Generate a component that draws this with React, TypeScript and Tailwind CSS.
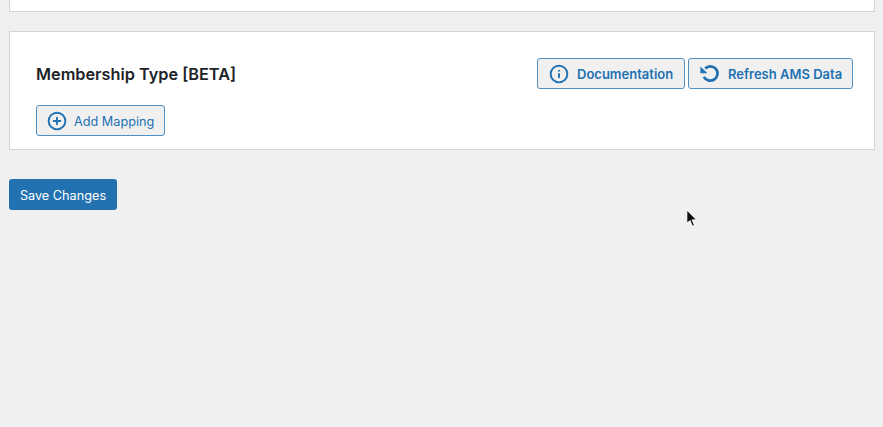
import { Info, CirclePlus } from 'lucide-react'

const font = { fontFamily: 'Inter, "Liberation Sans", sans-serif' }

function OutlineButton({ icon, label, className }: { icon: React.ReactNode; label: string; className: string }) {
  return (
    <button className={`flex items-center h-[31px] rounded-[3px] border border-[#4f90c4] bg-[#f0f0f1] text-[#2271b1] ${className}`}>
      {icon}
      <span className="mt-[2px]">{label}</span>
    </button>
  )
}

function RefreshIcon() {
  return (
    <svg width="19" height="19" viewBox="0 0 19 19" fill="none">
      <path d="M5.2 4.4A7.2 7.2 0 1 1 3.9 12.8" stroke="#2271b1" strokeWidth="2.8" />
      <path d="M0.4 2.4V9.2H7.4Z" fill="#2271b1" />
    </svg>
  )
}

export default function App() {
  return (
    <div style={font} className="relative w-[883px] h-[427px] bg-[#f0f0f1] overflow-hidden px-[9px]">
      <div className="h-[12px] w-[866px] bg-white border border-t-0 border-[#d2d3d4]" />

      <div className="mt-[19px] w-[866px] h-[119px] bg-white border border-[#d2d3d4] pl-[26px] pr-[21px] pt-[26px]">
        <div className="flex items-center justify-between h-[31px]">
          <h2 className="mt-[1px] text-[16.3px] font-semibold text-[#1d2327]">Membership Type [BETA]</h2>
          <div className="flex gap-[3px]">
            <OutlineButton
              className="w-[148px] pl-[11px] gap-[8px] text-[13px] font-semibold"
              icon={<Info size={20} strokeWidth={2.3} />}
              label="Documentation"
            />
            <OutlineButton
              className="w-[165px] pl-[11px] gap-[9px] text-[13px] font-semibold"
              icon={<RefreshIcon />}
              label="Refresh AMS Data"
            />
          </div>
        </div>
        <div className="mt-[16px] flex">
          <OutlineButton
            className="w-[129px] pl-[10px] gap-[7px] text-[12.7px]"
            icon={<CirclePlus size={20} strokeWidth={2.3} />}
            label="Add Mapping"
          />
        </div>
      </div>

      <button className="mt-[29px] w-[108px] h-[31px] pt-[2px] rounded-[3px] bg-[#2271b1] text-white text-[12.7px] block">
        Save Changes
      </button>

      {/* mouse cursor captured in the recording */}
      <svg className="absolute left-[685px] top-[208px]" width="13" height="21" viewBox="0 0 12 20">
        <path d="M1.5 1.5 L1.5 15 L4.6 12.2 L6.8 17.6 L9 16.7 L6.8 11.5 L10.8 11.2 Z" fill="#111" stroke="#fff" strokeWidth="1" />
      </svg>
    </div>
  )
}
